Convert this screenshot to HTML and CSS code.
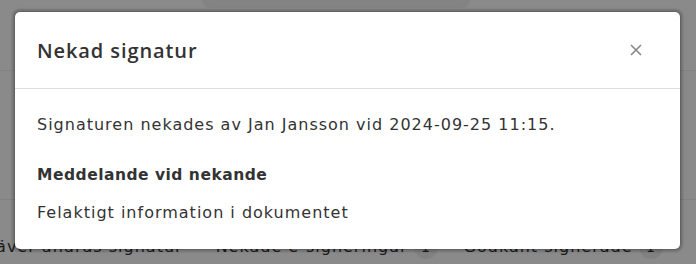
FILE: index.html
```html
<!DOCTYPE html>
<html lang="sv">
<head>
<meta charset="utf-8">
<title>Nekad signatur</title>
<link rel="stylesheet" href="styles.css">
</head>
<body>
<div class="page">
  <div class="topbar"><div class="tab"></div></div>
  <div class="row row-a"></div>
  <div class="stats">
    <span class="stat stat-first">Kräver andras signatur</span>
    <span class="stat stat-second">Nekade e-signeringar <span class="badge">1</span></span>
    <span class="stat">Godkänt signerade <span class="badge">1</span></span>
  </div>
  <div class="overlay"></div>
</div>
<div class="modal" role="dialog" aria-labelledby="modal-title">
  <div class="modal-header">
    <h2 id="modal-title" class="modal-title">Nekad signatur</h2>
    <button class="close" aria-label="Stäng">
      <svg width="12" height="12" viewBox="0 0 12 12"><path d="M1.5 1.5 L10.5 10.5 M10.5 1.5 L1.5 10.5" stroke="#8a8a8a" stroke-width="1.7" stroke-linecap="round" fill="none"/></svg>
    </button>
  </div>
  <div class="modal-body">
    <p class="lead">Signaturen nekades av Jan Jansson vid 2024-09-25 11:15.</p>
    <h3 class="label">Meddelande vid nekande</h3>
    <p class="message">Felaktigt information i dokumentet</p>
  </div>
</div>
</body>
</html>
```
FILE: styles.css
```css
* { box-sizing: border-box; }
html, body { margin: 0; padding: 0; }
body {
  width: 696px;
  height: 264px;
  overflow: hidden;
  font-family: "DejaVu Sans", "Noto Sans", sans-serif;
  color: #333;
  position: relative;
}
.page {
  position: relative;
  width: 696px;
  height: 264px;
  background: #ffffff;
}
.topbar {
  height: 71px;
  display: flex;
  justify-content: flex-start;
  padding-left: 202px;
  border-bottom: 1px solid #f0f0f0;
}
.tab {
  width: 268px;
  height: 8px;
  background: #f2f2f2;
  border-radius: 0 0 10px 10px;
}
.row-a {
  height: 129px;
  border-bottom: 1px solid #f0f0f0;
}
.stats {
  display: flex;
  align-items: center;
  padding-top: 35px;
  margin-left: -23px;
  font-size: 16px;
  letter-spacing: 1px;
  line-height: 24px;
  color: #333;
  white-space: nowrap;
}
.stat { display: inline-flex; align-items: center; margin-right: 26px; }
.stat-first { margin-right: 33px; }
.badge {
  display: inline-flex;
  align-items: center;
  justify-content: center;
  width: 24px;
  height: 24px;
  margin-left: 6px;
  border-radius: 50%;
  background: #eeeeee;
  font-size: 14px;
  letter-spacing: 0;
}
.overlay {
  position: absolute;
  inset: 0;
  background: rgba(0, 0, 0, 0.46);
}
.modal {
  position: absolute;
  left: 15px;
  top: 12px;
  width: 665px;
  height: 237px;
  background: #fff;
  border-radius: 5px;
  box-shadow: 0 0 0 1px rgba(0,0,0,0.12), 0 0 2px 3px rgba(0,0,0,0.18);
}
.modal-header {
  height: 77px;
  display: flex;
  align-items: center;
  justify-content: space-between;
  padding: 0 38px 0 22px;
  border-bottom: 1px solid #dcdcdc;
}
.modal-title {
  margin: 0;
  font-family: "Open Sans", "DejaVu Sans", sans-serif;
  font-size: 20px;
  font-weight: 600;
  letter-spacing: 0.9px;
  color: #333;
}
.close {
  border: 0;
  background: none;
  padding: 0;
  width: 12px;
  height: 12px;
  display: flex;
  cursor: pointer;
}
.modal-body {
  padding: 25px 22px 0 22px;
}
.lead {
  margin: 0;
  font-size: 16px;
  letter-spacing: 1px;
  line-height: 22px;
}
.label {
  margin: 28px 0 0 0;
  font-size: 15.5px;
  letter-spacing: 0.5px;
  line-height: 22px;
  font-weight: 700;
}
.message {
  margin: 16px 0 0 0;
  font-size: 16px;
  letter-spacing: 1px;
  line-height: 22px;
}
```
